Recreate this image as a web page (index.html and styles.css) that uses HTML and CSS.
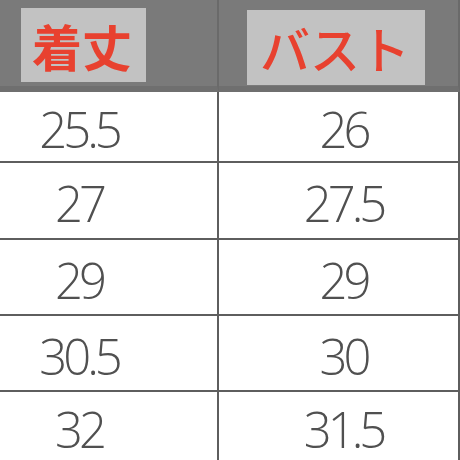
FILE: index.html
```html
<!DOCTYPE html>
<html lang="ja">
<head>
<meta charset="utf-8">
<title>サイズ表</title>
<link rel="stylesheet" href="styles.css">
</head>
<body>
<div class="table">
  <div class="head head-left"><span class="label label-left">着丈</span></div>
  <div class="head head-right"><span class="label label-right">バスト</span></div>

  <div class="cell left r1">25.5</div>
  <div class="cell right r1">26</div>

  <div class="cell left r2">27</div>
  <div class="cell right r2">27.5</div>

  <div class="cell left r3">29</div>
  <div class="cell right r3">29</div>

  <div class="cell left r4">30.5</div>
  <div class="cell right r4">30</div>

  <div class="cell left r5">32</div>
  <div class="cell right r5">31.5</div>
</div>
</body>
</html>
```

FILE: styles.css
```css
html, body {
  margin: 0;
  padding: 0;
  background: #ffffff;
}

.table {
  width: 460px;
  height: 460px;
  overflow: hidden;
  display: grid;
  grid-template-columns: 219px 241px;
  grid-template-rows: 92px 71px 77px 76px 76px 1fr;
}

.head {
  background: #7a7a7a;
  border-bottom: 6px solid #6f6f6f;
  box-sizing: border-box;
  border-right: 2px solid #6a6a6a;
}

.head-left {
  padding: 8px 0 0 21px;
}

.head-right {
  padding: 10px 0 0 28px;
}

.label {
  display: inline-block;
  background: #c2c2c2;
  color: #e8412f;
  font-family: "Noto Sans CJK JP", sans-serif;
  font-weight: 700;
  font-size: 50px;
  line-height: 74px;
  height: 74px;
}

.label-left {
  width: 125px;
  padding-left: 11px;
  box-sizing: border-box;
}

.label-right {
  width: 178px;
  height: 75px;
  line-height: 75px;
  padding-left: 13px;
  box-sizing: border-box;
  font-weight: 500;
}

.cell {
  display: flex;
  align-items: center;
  justify-content: center;
  box-sizing: border-box;
  border-right: 2px solid #5e5e5e;
  border-bottom: 2px solid #5e5e5e;
  padding-top: 6px;
  font-family: "Open Sans", sans-serif;
  font-weight: 300;
  font-size: 49px;
  line-height: 1;
  letter-spacing: -4px;
  color: #505050;
}

.cell.left {
  padding-right: 59px;
}

.cell.right {
  padding-left: 10px;
}

.cell.r5 {
  border-bottom: none;
}
```
